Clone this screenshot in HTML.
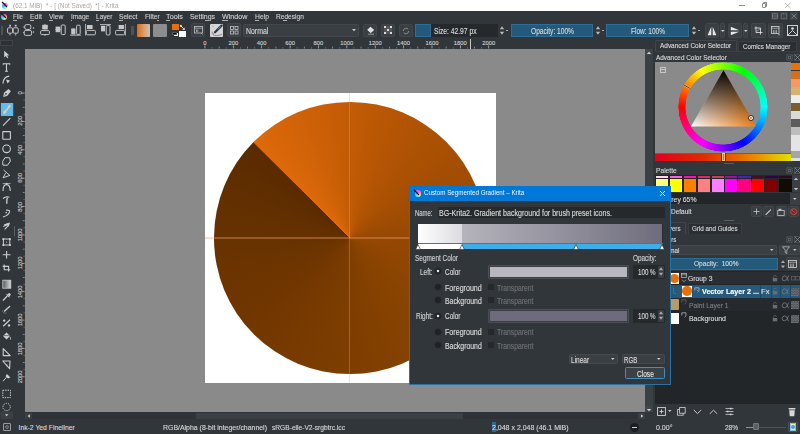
<!DOCTYPE html>
<html><head><meta charset="utf-8">
<style>
*{margin:0;padding:0;box-sizing:border-box}
html,body{width:800px;height:434px;overflow:hidden;background:#31363b;font-family:"Liberation Sans",sans-serif;color:#d8d8d8;position:relative}
.a{position:absolute}
.t{position:absolute;white-space:pre;line-height:1;-webkit-text-stroke:0.12px currentColor}
svg.a{overflow:visible}
</style></head><body>
<div class="a" style="left:0px;top:0px;width:800px;height:11px;background:#ffffff;"></div>
<div class="a" style="left:2.3280000000000003px;top:2.528px;width:6.072px;height:6.072px;border-radius:50%;background:conic-gradient(from 0deg,#ff50f0 0deg,#ff70d0 60deg,#ffe070 115deg,#b0ff90 165deg,#40e8ff 215deg,#50b0ff 260deg,#c070ff 310deg,#ff50f0 360deg)"></div>
<svg class="a" style="left:1.8px;top:2px;" width="6.6" height="6.6" viewBox="0 0 6.6 6.6"><path d="M0.33 0.33 L4.488 4.488" stroke="#1a1a1a" stroke-width="1.32" stroke-linecap="round"/></svg>
<div class="t" style="left:12.80px;top:3.10px;font-size:6.800px;color:#a8a8a8;font-weight:400;transform:scale(0.9400,1.000);transform-origin:0 2.50px;-webkit-text-stroke:0">(62.1 MiB)  * - [ (Not Saved)  *] - Krita</div>
<div class="a" style="left:739.2px;top:4.9px;width:5.4px;height:0.5px;background:#909090;"></div>
<div class="a" style="left:761.5px;top:3.4px;width:4.6px;height:4.4px;border:0.6px solid #8a8a8a;border-radius:1px"></div>
<div class="a" style="left:763px;top:2.4px;width:4.4px;height:4.2px;border-top:0.6px solid #8a8a8a;border-right:0.6px solid #8a8a8a;border-radius:1px"></div>
<svg class="a" style="left:784.7px;top:2.6px;" width="5.5" height="5" viewBox="0 0 5.5 5"><path d="M0 0L5.5 5M5.5 0L0 5" stroke="#8a8a8a" stroke-width="0.6"/></svg>
<div class="a" style="left:1.428px;top:13.528px;width:6.072px;height:6.072px;border-radius:50%;background:conic-gradient(from 0deg,#ff50f0 0deg,#ff70d0 60deg,#ffe070 115deg,#b0ff90 165deg,#40e8ff 215deg,#50b0ff 260deg,#c070ff 310deg,#ff50f0 360deg)"></div>
<svg class="a" style="left:0.9px;top:13px;" width="6.6" height="6.6" viewBox="0 0 6.6 6.6"><path d="M0.33 0.33 L4.488 4.488" stroke="#1a1a1a" stroke-width="1.32" stroke-linecap="round"/></svg>
<div class="t" style="left:13.20px;top:13.90px;font-size:6.800px;color:#cfcfcf;font-weight:400;transform:scale(0.9211,1.000);transform-origin:0 2.50px;">File</div>
<div class="t" style="left:29.90px;top:13.90px;font-size:6.800px;color:#cfcfcf;font-weight:400;transform:scale(1.0154,1.000);transform-origin:0 2.50px;">Edit</div>
<div class="t" style="left:48.90px;top:13.90px;font-size:6.800px;color:#cfcfcf;font-weight:400;transform:scale(0.9918,1.000);transform-origin:0 2.50px;">View</div>
<div class="t" style="left:70.50px;top:13.90px;font-size:6.800px;color:#cfcfcf;font-weight:400;transform:scale(0.9629,1.000);transform-origin:0 2.50px;">Image</div>
<div class="t" style="left:95.60px;top:13.90px;font-size:6.800px;color:#cfcfcf;font-weight:400;transform:scale(0.9641,1.000);transform-origin:0 2.50px;">Layer</div>
<div class="t" style="left:119.00px;top:13.90px;font-size:6.800px;color:#cfcfcf;font-weight:400;transform:scale(0.9734,1.000);transform-origin:0 2.50px;">Select</div>
<div class="t" style="left:144.50px;top:13.90px;font-size:6.800px;color:#cfcfcf;font-weight:400;transform:scale(0.9723,1.000);transform-origin:0 2.50px;">Filter</div>
<div class="t" style="left:166.00px;top:13.90px;font-size:6.800px;color:#cfcfcf;font-weight:400;transform:scale(1.0702,1.000);transform-origin:0 2.50px;">Tools</div>
<div class="t" style="left:190.00px;top:13.90px;font-size:6.800px;color:#cfcfcf;font-weight:400;transform:scale(1.0173,1.000);transform-origin:0 2.50px;">Settings</div>
<div class="t" style="left:222.30px;top:13.90px;font-size:6.800px;color:#cfcfcf;font-weight:400;transform:scale(1.0499,1.000);transform-origin:0 2.50px;">Window</div>
<div class="t" style="left:254.50px;top:13.90px;font-size:6.800px;color:#cfcfcf;font-weight:400;transform:scale(0.9933,1.000);transform-origin:0 2.50px;">Help</div>
<div class="t" style="left:275.50px;top:13.90px;font-size:6.800px;color:#cfcfcf;font-weight:400;transform:scale(0.9708,1.000);transform-origin:0 2.50px;">Redesign</div>
<div class="a" style="left:13.2px;top:19.7px;width:3.6px;height:0.6px;background:#b0b0b0;"></div>
<div class="a" style="left:29.9px;top:19.7px;width:3.8px;height:0.6px;background:#b0b0b0;"></div>
<div class="a" style="left:48.9px;top:19.7px;width:4.4px;height:0.6px;background:#b0b0b0;"></div>
<div class="a" style="left:70.5px;top:19.7px;width:1.6px;height:0.6px;background:#b0b0b0;"></div>
<div class="a" style="left:95.6px;top:19.7px;width:3.4px;height:0.6px;background:#b0b0b0;"></div>
<div class="a" style="left:119px;top:19.7px;width:3.8px;height:0.6px;background:#b0b0b0;"></div>
<div class="a" style="left:156.8px;top:19.7px;width:2.4px;height:0.6px;background:#b0b0b0;"></div>
<div class="a" style="left:166px;top:19.7px;width:3.8px;height:0.6px;background:#b0b0b0;"></div>
<div class="a" style="left:205.2px;top:19.7px;width:3.6px;height:0.6px;background:#b0b0b0;"></div>
<div class="a" style="left:222.3px;top:19.7px;width:6px;height:0.6px;background:#b0b0b0;"></div>
<div class="a" style="left:254.5px;top:19.7px;width:4.4px;height:0.6px;background:#b0b0b0;"></div>
<div class="a" style="left:283.3px;top:19.7px;width:3.6px;height:0.6px;background:#b0b0b0;"></div>
<div class="a" style="left:770.7px;top:12.3px;width:8px;height:7.8px;background:#40454a;border-radius:1px"></div>
<div class="a" style="left:780.3px;top:12.3px;width:8px;height:7.8px;background:#40454a;border-radius:1px"></div>
<div class="a" style="left:790.4px;top:12.3px;width:8px;height:7.8px;background:#40454a;border-radius:1px"></div>
<svg class="a" style="left:770.7px;top:12.3px;" width="8" height="8" viewBox="0 0 8 8"><rect x="1.5" y="1.8" width="5" height="4.4" fill="none" stroke="#8a8f94" stroke-width="0.6"/><path d="M1.5 4H6.5" stroke="#8a8f94" stroke-width="0.6"/></svg>
<svg class="a" style="left:780.3px;top:12.3px;" width="8" height="8" viewBox="0 0 8 8"><rect x="1.5" y="1.5" width="5" height="5" fill="none" stroke="#8a8f94" stroke-width="0.6" stroke-dasharray="1 0.6"/></svg>
<svg class="a" style="left:790.4px;top:12.3px;" width="8" height="8" viewBox="0 0 8 8"><path d="M1.5 1.5L6.5 6.5M6.5 1.5L1.5 6.5" stroke="#8a8f94" stroke-width="0.7"/></svg>
<div class="a" style="left:1.3px;top:25.7px;width:2.2px;height:9.2px;background:#4d5257;"></div>
<svg class="a" style="left:7px;top:24px;" width="12" height="12" viewBox="0 0 12 12"><rect x="0.6" y="3.8" width="5" height="5.4" rx="1" fill="none" stroke="#c4c6c8" stroke-width="1"/><rect x="6.2" y="3.8" width="5" height="5.4" rx="1" fill="none" stroke="#c4c6c8" stroke-width="1"/><rect x="2.2" y="0.8" width="1.8" height="1.8" fill="#c4c6c8"/><rect x="7.8" y="0.8" width="1.8" height="1.8" fill="#c4c6c8"/><path d="M3 9.5V11.5M8.7 9.5V11.5" stroke="#c4c6c8" stroke-width="0.9"/></svg>
<svg class="a" style="left:23px;top:24px;" width="12" height="12" viewBox="0 0 12 12"><rect x="1.8" y="0.6" width="6" height="4.8" rx="1.5" fill="none" stroke="#c4c6c8" stroke-width="1"/><rect x="1.2" y="6.4" width="7.4" height="5" rx="1.5" fill="none" stroke="#c4c6c8" stroke-width="1"/><circle cx="10.5" cy="4" r="0.8" fill="#c4c6c8"/><circle cx="10.5" cy="8" r="0.8" fill="#c4c6c8"/><path d="M0 3H1.8M0 8.5H1.2" stroke="#c4c6c8" stroke-width="0.8"/></svg>
<svg class="a" style="left:39.5px;top:24px;" width="11" height="12" viewBox="0 0 11 12"><rect x="2.2" y="0.8" width="5.6" height="4.6" fill="#c4c6c8"/><rect x="0.6" y="6.6" width="8.8" height="4" rx="1" fill="none" stroke="#c4c6c8" stroke-width="1"/><path d="M5 0V1M5 5.4V6.6M5 10.6V12" stroke="#c4c6c8" stroke-width="0.8"/></svg>
<svg class="a" style="left:54.5px;top:24px;" width="11" height="12" viewBox="0 0 11 12"><rect x="0.6" y="2.6" width="4.6" height="5.6" fill="#c4c6c8"/><rect x="6.2" y="1" width="4" height="9.6" rx="1" fill="none" stroke="#c4c6c8" stroke-width="1"/><path d="M0 5.4H0.6M5.2 5.4H6.2" stroke="#c4c6c8" stroke-width="0.8"/></svg>
<svg class="a" style="left:69.5px;top:24px;" width="11" height="12" viewBox="0 0 11 12"><rect x="1.2" y="4.4" width="4.2" height="6" fill="#c4c6c8"/><rect x="6.6" y="1.2" width="3.6" height="9.2" rx="1" fill="none" stroke="#c4c6c8" stroke-width="1"/><path d="M0 11.2H11" stroke="#c4c6c8" stroke-width="0.9"/></svg>
<svg class="a" style="left:84.5px;top:24px;" width="11" height="12" viewBox="0 0 11 12"><path d="M0.6 0V11.5" stroke="#c4c6c8" stroke-width="0.9"/><rect x="2" y="1" width="5.6" height="4" fill="#c4c6c8"/><rect x="1.4" y="6.4" width="9" height="4.4" rx="1" fill="none" stroke="#c4c6c8" stroke-width="1"/></svg>
<svg class="a" style="left:99.5px;top:24px;" width="11" height="12" viewBox="0 0 11 12"><path d="M0 0.6H11" stroke="#c4c6c8" stroke-width="0.9"/><rect x="1" y="1.8" width="4" height="5.6" fill="#c4c6c8"/><rect x="6.2" y="1.6" width="3.8" height="9.4" rx="1" fill="none" stroke="#c4c6c8" stroke-width="1"/></svg>
<svg class="a" style="left:115px;top:24px;" width="11" height="12" viewBox="0 0 11 12"><path d="M10.4 0V11.5" stroke="#c4c6c8" stroke-width="0.9"/><rect x="3.6" y="1" width="5.4" height="4" fill="#c4c6c8"/><rect x="0.6" y="6.4" width="9" height="4.4" rx="1" fill="none" stroke="#c4c6c8" stroke-width="1"/></svg>
<div class="a" style="left:131px;top:25.8px;width:2.6px;height:9.2px;background:#4d5257;"></div>
<div class="a" style="left:136.8px;top:23.7px;width:13.5px;height:13.3px;background:linear-gradient(90deg,#e06a10,#d7a072 55%,#c8c2bc);border-radius:1px"></div>
<div class="a" style="left:153px;top:23.7px;width:13.7px;height:13.3px;background:#8d8d8d;border-radius:1px"></div>
<div class="a" style="left:171.9px;top:23.9px;width:6.9px;height:6px;background:#e8700a;"></div>
<div class="a" style="left:179.4px;top:31px;width:6.2px;height:6px;background:#ffffff;"></div>
<div class="a" style="left:174.2px;top:32.8px;width:3.8px;height:3.6px;background:#fff;"></div>
<div class="a" style="left:172.2px;top:31.6px;width:4.4px;height:3.2px;background:#000;border:0.5px solid #555"></div>
<svg class="a" style="left:179px;top:23.5px;" width="7" height="7" viewBox="0 0 7 7"><path d="M1.8 1.8 L4.6 4.8" stroke="#e8e8e8" stroke-width="1"/><path d="M0.8 0.8 L3.2 1.2 L1.2 3.2Z" fill="#e8e8e8"/><path d="M5.8 6 L3.2 5.8 L5.6 3.4Z" fill="#e8e8e8"/></svg>
<div class="a" style="left:191px;top:23.3px;width:14.2px;height:14px;background:#3a3f44;border:0.6px solid #42474c;border-radius:1.5px"></div>
<svg class="a" style="left:193.5px;top:26px;" width="10" height="9" viewBox="0 0 10 9"><rect x="0.5" y="0.5" width="8" height="6.5" fill="none" stroke="#c4c6c8" stroke-width="0.8"/><path d="M0.5 2.2H8.5M2.5 3.5V6M3.8 3.5V6" stroke="#c4c6c8" stroke-width="0.7"/><path d="M7 7L8.5 8.5" stroke="#c4c6c8" stroke-width="0.7"/></svg>
<div class="a" style="left:209.6px;top:23.7px;width:13.4px;height:13.3px;background:#d6d6d6;border-radius:1px"></div>
<svg class="a" style="left:209.6px;top:23.7px;" width="13.4" height="13.3" viewBox="0 0 13.4 13.3"><path d="M11.6 1.6 L5 8.2" stroke="#2c3440" stroke-width="2.2" stroke-linecap="round"/><path d="M10.8 2.4 L8 5.2" stroke="#5a9ac0" stroke-width="0.9"/><path d="M5 8.2 L3.6 9.6" stroke="#2c3440" stroke-width="0.8"/><path d="M2.2 7.5 Q1.5 12 7 11.6 Q11 11.2 12.2 10.2" stroke="#7a7a7a" stroke-width="0.8" fill="none"/><path d="M1.8 1.6 L4 3" stroke="#999" stroke-width="0.6"/></svg>
<div class="a" style="left:226.7px;top:23.3px;width:14.3px;height:14px;background:#3a3f44;border:0.6px solid #42474c;border-radius:1.5px"></div>
<svg class="a" style="left:229.5px;top:26px;" width="9" height="9" viewBox="0 0 9 9"><rect x="0.5" y="0.5" width="3" height="3" fill="none" stroke="#c4c6c8" stroke-width="0.8"/><rect x="5" y="0.5" width="3" height="3" fill="none" stroke="#c4c6c8" stroke-width="0.8"/><rect x="0.5" y="5" width="3" height="3" fill="none" stroke="#c4c6c8" stroke-width="0.8"/><rect x="5" y="5" width="3" height="3" fill="none" stroke="#c4c6c8" stroke-width="0.8"/></svg>
<div class="a" style="left:243.3px;top:23.5px;width:116px;height:13.6px;background:#3a3f44;border:0.6px solid #45494e;border-radius:1.5px"></div>
<div class="t" style="left:245.50px;top:28.00px;font-size:6.800px;color:#d6d6d6;font-weight:400;transform:scale(1.0174,1.200);transform-origin:0 2.50px;">Normal</div>
<svg class="a" style="left:352px;top:29.3px;" width="4" height="3" viewBox="0 0 4 3"><path d="M0 0H4L2 2.2Z" fill="#c8c8c8"/></svg>
<div class="a" style="left:362.7px;top:23.5px;width:14.6px;height:13.6px;background:#3a3f44;border:0.6px solid #42474c;border-radius:1.5px"></div>
<svg class="a" style="left:365.5px;top:26px;" width="9" height="9" viewBox="0 0 9 9"><path d="M4.5 0.8L8.2 4 L4.5 7.2 L1 4Z" fill="#e0e0e0"/><path d="M1 4L3 6L4.5 7.2" stroke="#31363b" stroke-width="0.6" fill="none"/><path d="M2 8.2H8" stroke="#ccc" stroke-width="0.6"/></svg>
<div class="a" style="left:381px;top:23.5px;width:14.3px;height:13.6px;background:#3a3f44;border:0.6px solid #42474c;border-radius:1.5px"></div>
<svg class="a" style="left:384px;top:26.3px;" width="8" height="8" viewBox="0 0 8 8"><rect x="0" y="0" width="8" height="8" fill="#ddd"/><rect x="2" y="0" width="4" height="2" fill="#555"/><rect x="0" y="2" width="2" height="4" fill="#555"/><rect x="6" y="2" width="2" height="4" fill="#555"/><rect x="2" y="6" width="4" height="2" fill="#555"/><rect x="2" y="2" width="4" height="4" fill="#555"/><rect x="3" y="3" width="2" height="2" fill="#ddd"/></svg>
<div class="a" style="left:398.7px;top:23.5px;width:14.3px;height:13.6px;background:#3a3f44;border:0.6px solid #42474c;border-radius:1.5px"></div>
<svg class="a" style="left:402px;top:26.5px;" width="8" height="8" viewBox="0 0 8 8"><path d="M1.3 4 A2.8 2.8 0 0 1 6.2 2.2M6.7 4 A2.8 2.8 0 0 1 1.8 5.8" fill="none" stroke="#9a9ea2" stroke-width="0.8"/></svg>
<div class="a" style="left:415px;top:23.75px;width:16.3px;height:13.2px;background:#23597a;border:0.6px solid #2f6e92"></div>
<div class="a" style="left:431.3px;top:23.75px;width:66.3px;height:13.2px;background:#25292c;"></div>
<div class="t" style="left:434.40px;top:28.00px;font-size:6.800px;color:#d6d6d6;font-weight:400;transform:scale(0.9862,1.200);transform-origin:0 2.50px;">Size: 42.97 px</div>
<svg class="a" style="left:499px;top:24px;" width="6" height="13" viewBox="0 0 6 13"><path d="M0.9 5.2L3 2.34L5.1 5.2Z" fill="#bbb"/><path d="M0.9 7.8L3 10.66L5.1 7.8Z" fill="#bbb"/></svg>
<div class="a" style="left:506px;top:30.3px;width:2px;height:0.7px;background:#aaa;"></div>
<div class="a" style="left:510.6px;top:23.75px;width:82.4px;height:13.2px;background:#23597a;border:0.6px solid #2f6e92"></div>
<div class="t" style="left:530.50px;top:28.00px;font-size:6.800px;color:#d6d6d6;font-weight:400;transform:scale(0.9721,1.200);transform-origin:0 2.50px;">Opacity: 100%</div>
<svg class="a" style="left:595px;top:24px;" width="6" height="13" viewBox="0 0 6 13"><path d="M0.9 5.2L3 2.34L5.1 5.2Z" fill="#bbb"/><path d="M0.9 7.8L3 10.66L5.1 7.8Z" fill="#bbb"/></svg>
<div class="a" style="left:602px;top:30.3px;width:2px;height:0.7px;background:#aaa;"></div>
<div class="a" style="left:606px;top:23.75px;width:83px;height:13.2px;background:#23597a;border:0.6px solid #2f6e92"></div>
<div class="t" style="left:630.50px;top:28.00px;font-size:6.800px;color:#d6d6d6;font-weight:400;transform:scale(0.9569,1.200);transform-origin:0 2.50px;">Flow: 100%</div>
<svg class="a" style="left:690.5px;top:24px;" width="6" height="13" viewBox="0 0 6 13"><path d="M0.9 5.2L3 2.34L5.1 5.2Z" fill="#bbb"/><path d="M0.9 7.8L3 10.66L5.1 7.8Z" fill="#bbb"/></svg>
<div class="a" style="left:697.5px;top:30.3px;width:2px;height:0.7px;background:#aaa;"></div>
<div class="a" style="left:705px;top:23.2px;width:14px;height:14.5px;background:#3a3f44;border:0.6px solid #42474c;border-radius:1.5px"></div>
<svg class="a" style="left:707px;top:25.5px;" width="10" height="10" viewBox="0 0 10 10"><path d="M4.3 0.8 L0.6 9.2 H4.3Z" fill="#e8e8e8"/><path d="M5.7 0.8 L9.4 9.2 H5.7Z" fill="#e8e8e8"/></svg>
<div class="a" style="left:720px;top:23.2px;width:5px;height:14.5px;background:#3a3f44;border:0.6px solid #42474c;border-radius:1.5px"></div>
<svg class="a" style="left:720.7px;top:29.5px;" width="4" height="3" viewBox="0 0 4 3"><path d="M0 0H3.6L1.8 2Z" fill="#ccc"/></svg>
<div class="a" style="left:728px;top:23.2px;width:14px;height:14.5px;background:#3a3f44;border:0.6px solid #42474c;border-radius:1.5px"></div>
<svg class="a" style="left:730px;top:25.5px;" width="10" height="10" viewBox="0 0 10 10"><path d="M0.8 0.8 L9.2 4.3 V0.8Z" fill="none"/><path d="M0.8 0.8 L9.2 4.3 H0.8Z" fill="#e8e8e8"/><path d="M0.8 9.2 L9.2 5.7 H0.8Z" fill="#e8e8e8"/></svg>
<div class="a" style="left:743px;top:23.2px;width:5px;height:14.5px;background:#3a3f44;border:0.6px solid #42474c;border-radius:1.5px"></div>
<svg class="a" style="left:743.7px;top:29.5px;" width="4" height="3" viewBox="0 0 4 3"><path d="M0 0H3.6L1.8 2Z" fill="#ccc"/></svg>
<div class="a" style="left:751px;top:23.2px;width:14.5px;height:14.5px;background:#3a3f44;border:0.6px solid #42474c;border-radius:1.5px"></div>
<svg class="a" style="left:754px;top:26px;" width="9" height="9" viewBox="0 0 9 9"><path d="M2 0.5V6.5H8.5M0.5 2H6.5V8.5" fill="none" stroke="#d8d8d8" stroke-width="0.9"/><path d="M3 5.5L6 2.5" stroke="#d8d8d8" stroke-width="0.7"/></svg>
<div class="a" style="left:768.3px;top:23.2px;width:14.5px;height:14.5px;background:#3a3f44;border:0.6px solid #42474c;border-radius:1.5px"></div>
<svg class="a" style="left:771px;top:26px;" width="10" height="10" viewBox="0 0 10 10"><rect x="0.5" y="0.5" width="7.5" height="7" fill="none" stroke="#d8d8d8" stroke-width="0.8"/><path d="M0.5 2.3H8M2.5 4V7M4 4V7M5.5 4V7" stroke="#d8d8d8" stroke-width="0.6"/><path d="M7 8.5L9 9" stroke="#d8d8d8" stroke-width="0.6"/></svg>
<svg class="a" style="left:786.5px;top:25px;" width="11" height="11" viewBox="0 0 11 11"><rect x="0.5" y="0.5" width="10" height="10" fill="none" stroke="#e0e0e0" stroke-width="0.9"/><path d="M0.5 10.5L5.5 5.5L10.5 10.5" fill="none" stroke="#e0e0e0" stroke-width="0.9"/><circle cx="5.5" cy="3.5" r="1.3" fill="#e0e0e0"/></svg>
<div class="a" style="left:0px;top:40px;width:13px;height:6.2px;background:#2d3135;border:0.6px solid #3f4449"></div>
<svg class="a" style="left:0;top:0" width="800" height="60"><rect x="204.60" y="45.4" width="0.7" height="3" fill="#c8c8c8"/><rect x="211.69" y="47.3" width="0.6" height="1.2" fill="#999"/><rect x="218.79" y="46.6" width="0.7" height="1.9" fill="#aaaaaa"/><rect x="225.88" y="47.3" width="0.6" height="1.2" fill="#999"/><rect x="232.98" y="45.4" width="0.7" height="3" fill="#c8c8c8"/><rect x="240.07" y="47.3" width="0.6" height="1.2" fill="#999"/><rect x="247.17" y="46.6" width="0.7" height="1.9" fill="#aaaaaa"/><rect x="254.26" y="47.3" width="0.6" height="1.2" fill="#999"/><rect x="261.36" y="45.4" width="0.7" height="3" fill="#c8c8c8"/><rect x="268.45" y="47.3" width="0.6" height="1.2" fill="#999"/><rect x="275.55" y="46.6" width="0.7" height="1.9" fill="#aaaaaa"/><rect x="282.64" y="47.3" width="0.6" height="1.2" fill="#999"/><rect x="289.74" y="45.4" width="0.7" height="3" fill="#c8c8c8"/><rect x="296.83" y="47.3" width="0.6" height="1.2" fill="#999"/><rect x="303.93" y="46.6" width="0.7" height="1.9" fill="#aaaaaa"/><rect x="311.02" y="47.3" width="0.6" height="1.2" fill="#999"/><rect x="318.12" y="45.4" width="0.7" height="3" fill="#c8c8c8"/><rect x="325.21" y="47.3" width="0.6" height="1.2" fill="#999"/><rect x="332.31" y="46.6" width="0.7" height="1.9" fill="#aaaaaa"/><rect x="339.40" y="47.3" width="0.6" height="1.2" fill="#999"/><rect x="346.49" y="45.4" width="0.7" height="3" fill="#c8c8c8"/><rect x="353.59" y="47.3" width="0.6" height="1.2" fill="#999"/><rect x="360.68" y="46.6" width="0.7" height="1.9" fill="#aaaaaa"/><rect x="367.78" y="47.3" width="0.6" height="1.2" fill="#999"/><rect x="374.87" y="45.4" width="0.7" height="3" fill="#c8c8c8"/><rect x="381.97" y="47.3" width="0.6" height="1.2" fill="#999"/><rect x="389.06" y="46.6" width="0.7" height="1.9" fill="#aaaaaa"/><rect x="396.16" y="47.3" width="0.6" height="1.2" fill="#999"/><rect x="403.25" y="45.4" width="0.7" height="3" fill="#c8c8c8"/><rect x="410.35" y="47.3" width="0.6" height="1.2" fill="#999"/><rect x="417.44" y="46.6" width="0.7" height="1.9" fill="#aaaaaa"/><rect x="424.54" y="47.3" width="0.6" height="1.2" fill="#999"/><rect x="431.63" y="45.4" width="0.7" height="3" fill="#c8c8c8"/><rect x="438.73" y="47.3" width="0.6" height="1.2" fill="#999"/><rect x="445.82" y="46.6" width="0.7" height="1.9" fill="#aaaaaa"/><rect x="452.92" y="47.3" width="0.6" height="1.2" fill="#999"/><rect x="460.01" y="45.4" width="0.7" height="3" fill="#c8c8c8"/><rect x="467.10" y="47.3" width="0.6" height="1.2" fill="#999"/><rect x="474.20" y="46.6" width="0.7" height="1.9" fill="#aaaaaa"/><rect x="481.29" y="47.3" width="0.6" height="1.2" fill="#999"/><rect x="488.39" y="45.4" width="0.7" height="3" fill="#c8c8c8"/></svg>
<div class="t" style="left:203.29px;top:40.79px;font-size:5.800px;color:#d0d0d0;font-weight:400;">0</div>
<div class="t" style="left:228.44px;top:40.79px;font-size:5.800px;color:#d0d0d0;font-weight:400;">200</div>
<div class="t" style="left:256.82px;top:40.79px;font-size:5.800px;color:#d0d0d0;font-weight:400;">400</div>
<div class="t" style="left:285.20px;top:40.79px;font-size:5.800px;color:#d0d0d0;font-weight:400;">600</div>
<div class="t" style="left:313.58px;top:40.79px;font-size:5.800px;color:#d0d0d0;font-weight:400;">800</div>
<div class="t" style="left:340.34px;top:40.79px;font-size:5.800px;color:#d0d0d0;font-weight:400;">1000</div>
<div class="t" style="left:368.72px;top:40.79px;font-size:5.800px;color:#d0d0d0;font-weight:400;">1200</div>
<div class="t" style="left:397.10px;top:40.79px;font-size:5.800px;color:#d0d0d0;font-weight:400;">1400</div>
<div class="t" style="left:425.48px;top:40.79px;font-size:5.800px;color:#d0d0d0;font-weight:400;">1600</div>
<div class="t" style="left:453.86px;top:40.79px;font-size:5.800px;color:#d0d0d0;font-weight:400;">1800</div>
<div class="t" style="left:482.24px;top:40.79px;font-size:5.800px;color:#d0d0d0;font-weight:400;">2000</div>
<div class="a" style="left:469.6px;top:39px;width:0.8px;height:9.5px;background:#c8c8c8;"></div>
<svg class="a" style="left:0;top:0" width="30" height="434"><rect x="21.6" y="92.70" width="3" height="0.7" fill="#c8c8c8"/><rect x="23.5" y="99.79" width="1.2" height="0.6" fill="#999"/><rect x="22.8" y="106.89" width="1.9" height="0.7" fill="#aaaaaa"/><rect x="23.5" y="113.98" width="1.2" height="0.6" fill="#999"/><rect x="21.6" y="121.08" width="3" height="0.7" fill="#c8c8c8"/><rect x="23.5" y="128.17" width="1.2" height="0.6" fill="#999"/><rect x="22.8" y="135.27" width="1.9" height="0.7" fill="#aaaaaa"/><rect x="23.5" y="142.36" width="1.2" height="0.6" fill="#999"/><rect x="21.6" y="149.46" width="3" height="0.7" fill="#c8c8c8"/><rect x="23.5" y="156.55" width="1.2" height="0.6" fill="#999"/><rect x="22.8" y="163.65" width="1.9" height="0.7" fill="#aaaaaa"/><rect x="23.5" y="170.74" width="1.2" height="0.6" fill="#999"/><rect x="21.6" y="177.84" width="3" height="0.7" fill="#c8c8c8"/><rect x="23.5" y="184.93" width="1.2" height="0.6" fill="#999"/><rect x="22.8" y="192.03" width="1.9" height="0.7" fill="#aaaaaa"/><rect x="23.5" y="199.12" width="1.2" height="0.6" fill="#999"/><rect x="21.6" y="206.22" width="3" height="0.7" fill="#c8c8c8"/><rect x="23.5" y="213.31" width="1.2" height="0.6" fill="#999"/><rect x="22.8" y="220.41" width="1.9" height="0.7" fill="#aaaaaa"/><rect x="23.5" y="227.50" width="1.2" height="0.6" fill="#999"/><rect x="21.6" y="234.59" width="3" height="0.7" fill="#c8c8c8"/><rect x="23.5" y="241.69" width="1.2" height="0.6" fill="#999"/><rect x="22.8" y="248.78" width="1.9" height="0.7" fill="#aaaaaa"/><rect x="23.5" y="255.88" width="1.2" height="0.6" fill="#999"/><rect x="21.6" y="262.97" width="3" height="0.7" fill="#c8c8c8"/><rect x="23.5" y="270.07" width="1.2" height="0.6" fill="#999"/><rect x="22.8" y="277.16" width="1.9" height="0.7" fill="#aaaaaa"/><rect x="23.5" y="284.26" width="1.2" height="0.6" fill="#999"/><rect x="21.6" y="291.35" width="3" height="0.7" fill="#c8c8c8"/><rect x="23.5" y="298.45" width="1.2" height="0.6" fill="#999"/><rect x="22.8" y="305.54" width="1.9" height="0.7" fill="#aaaaaa"/><rect x="23.5" y="312.64" width="1.2" height="0.6" fill="#999"/><rect x="21.6" y="319.73" width="3" height="0.7" fill="#c8c8c8"/><rect x="23.5" y="326.83" width="1.2" height="0.6" fill="#999"/><rect x="22.8" y="333.92" width="1.9" height="0.7" fill="#aaaaaa"/><rect x="23.5" y="341.02" width="1.2" height="0.6" fill="#999"/><rect x="21.6" y="348.11" width="3" height="0.7" fill="#c8c8c8"/><rect x="23.5" y="355.20" width="1.2" height="0.6" fill="#999"/><rect x="22.8" y="362.30" width="1.9" height="0.7" fill="#aaaaaa"/><rect x="23.5" y="369.39" width="1.2" height="0.6" fill="#999"/><rect x="21.6" y="376.49" width="3" height="0.7" fill="#c8c8c8"/></svg>
<div class="t" style="left:11px;top:90.10px;width:20px;height:5.8px;font-size:5.8px;text-align:center;color:#d0d0d0;transform:rotate(-90deg);transform-origin:10px 2.9px">0</div>
<div class="t" style="left:11px;top:118.48px;width:20px;height:5.8px;font-size:5.8px;text-align:center;color:#d0d0d0;transform:rotate(-90deg);transform-origin:10px 2.9px">200</div>
<div class="t" style="left:11px;top:146.86px;width:20px;height:5.8px;font-size:5.8px;text-align:center;color:#d0d0d0;transform:rotate(-90deg);transform-origin:10px 2.9px">400</div>
<div class="t" style="left:11px;top:175.24px;width:20px;height:5.8px;font-size:5.8px;text-align:center;color:#d0d0d0;transform:rotate(-90deg);transform-origin:10px 2.9px">600</div>
<div class="t" style="left:11px;top:203.62px;width:20px;height:5.8px;font-size:5.8px;text-align:center;color:#d0d0d0;transform:rotate(-90deg);transform-origin:10px 2.9px">800</div>
<div class="t" style="left:11px;top:231.99px;width:20px;height:5.8px;font-size:5.8px;text-align:center;color:#d0d0d0;transform:rotate(-90deg);transform-origin:10px 2.9px">1000</div>
<div class="t" style="left:11px;top:260.37px;width:20px;height:5.8px;font-size:5.8px;text-align:center;color:#d0d0d0;transform:rotate(-90deg);transform-origin:10px 2.9px">1200</div>
<div class="t" style="left:11px;top:288.75px;width:20px;height:5.8px;font-size:5.8px;text-align:center;color:#d0d0d0;transform:rotate(-90deg);transform-origin:10px 2.9px">1400</div>
<div class="t" style="left:11px;top:317.13px;width:20px;height:5.8px;font-size:5.8px;text-align:center;color:#d0d0d0;transform:rotate(-90deg);transform-origin:10px 2.9px">1600</div>
<div class="t" style="left:11px;top:345.51px;width:20px;height:5.8px;font-size:5.8px;text-align:center;color:#d0d0d0;transform:rotate(-90deg);transform-origin:10px 2.9px">1800</div>
<div class="t" style="left:11px;top:373.89px;width:20px;height:5.8px;font-size:5.8px;text-align:center;color:#d0d0d0;transform:rotate(-90deg);transform-origin:10px 2.9px">2000</div>
<div class="a" style="left:25px;top:48.6px;width:619.5px;height:363.7px;background:#8a8a8a;"></div>
<div class="a" style="left:204.8px;top:92.7px;width:290.8px;height:290.2px;background:#ffffff;"></div>
<div class="a" style="left:214.3px;top:102px;width:271.6px;height:271.6px;border-radius:50%;background:conic-gradient(from 315deg,#dd690a 0deg,#c25b05 45deg,#b05304 75deg,#a24d03 105deg,#964802 135deg,#8a4401 180deg,#7e3e00 225deg,#733700 270deg,#673200 315deg,#5a2b00 359.4deg,#dd690a 360deg)"></div>
<div class="a" style="left:348.9px;top:92.7px;width:1.4px;height:290.2px;background:rgba(245,160,110,0.36);"></div>
<div class="a" style="left:204.8px;top:237.3px;width:290.8px;height:1.4px;background:rgba(245,160,110,0.36);"></div>
<div class="a" style="left:644.5px;top:48.6px;width:8px;height:363.7px;background:#3b4045;"></div>
<div class="a" style="left:645px;top:49px;width:6.5px;height:6px;background:#41464b;"></div>
<svg class="a" style="left:645.5px;top:50.5px;" width="6" height="4" viewBox="0 0 6 4"><path d="M0.8 3L3 0.8L5.2 3Z" fill="#d0d0d0"/></svg>
<div class="a" style="left:645px;top:406px;width:6.5px;height:6px;background:#41464b;"></div>
<svg class="a" style="left:645.5px;top:407.5px;" width="6" height="4" viewBox="0 0 6 4"><path d="M0.8 1L3 3.2L5.2 1Z" fill="#d0d0d0"/></svg>
<div class="a" style="left:25px;top:412.3px;width:619.5px;height:7.2px;background:#2f3337;"></div>
<div class="a" style="left:195.5px;top:412.5px;width:267px;height:6.8px;background:#3b4045;"></div>
<div class="a" style="left:25.3px;top:412.6px;width:6.5px;height:6.5px;background:#3a3f44;"></div>
<svg class="a" style="left:26px;top:413px;" width="6" height="6" viewBox="0 0 6 6"><path d="M3.8 1.2L1.6 3L3.8 4.8Z" fill="#d0d0d0"/></svg>
<div class="a" style="left:638px;top:412.6px;width:6.5px;height:6.5px;background:#3a3f44;"></div>
<svg class="a" style="left:638.5px;top:413px;" width="6" height="6" viewBox="0 0 6 6"><path d="M2 1.2L4.2 3L2 4.8Z" fill="#d0d0d0"/></svg>
<div class="a" style="left:0px;top:419.5px;width:800px;height:14.5px;background:#31363b;"></div>
<div class="a" style="left:3px;top:423px;width:8px;height:8px;border:0.8px solid #9a9ea2;border-radius:1px"></div>
<div class="a" style="left:4.8px;top:424.8px;width:4.4px;height:4.4px;border:0.6px solid #777;border-radius:50%;background:#555"></div>
<div class="t" style="left:18.50px;top:424.70px;font-size:6.800px;color:#d8d8d8;font-weight:400;">Ink-2 Yed Fineliner</div>
<div class="t" style="left:163.00px;top:424.70px;font-size:6.800px;color:#d8d8d8;font-weight:400;transform:scale(1.0191,1.000);transform-origin:0 2.50px;">RGB/Alpha (8-bit integer/channel)</div>
<div class="t" style="left:272.00px;top:424.70px;font-size:6.800px;color:#d8d8d8;font-weight:400;transform:scale(0.9757,1.000);transform-origin:0 2.50px;">sRGB-elle-V2-srgbtrc.icc</div>
<div class="a" style="left:491.8px;top:422.3px;width:4.2px;height:9.5px;background:#2a6a96;"></div>
<div class="t" style="left:492.40px;top:424.70px;font-size:6.800px;color:#d8d8d8;font-weight:400;transform:scale(1.0286,1.000);transform-origin:0 2.50px;">2,048 x 2,048 (46.1 MiB)</div>
<div class="a" style="left:629.8px;top:422.5px;width:9px;height:9px;border-radius:50%;background:#1c1f22"></div>
<div class="a" style="left:632px;top:426.6px;width:5px;height:0.8px;background:#d0d0d0;"></div>
<div class="t" style="left:655.50px;top:424.70px;font-size:6.800px;color:#d8d8d8;font-weight:400;transform:scale(1.0339,1.000);transform-origin:0 2.50px;">0.00°</div>
<div class="t" style="left:724.50px;top:424.70px;font-size:6.800px;color:#d8d8d8;font-weight:400;transform:scale(0.9551,1.000);transform-origin:0 2.50px;">28%</div>
<div class="a" style="left:746px;top:427px;width:40px;height:0.6px;background:#50555a;"></div>
<div class="a" style="left:746px;top:426.7px;width:8px;height:1.2px;background:#3daee9;"></div>
<div class="a" style="left:753px;top:423.3px;width:6px;height:7px;background:#5a5f64;border:0.6px solid #777;border-radius:1px"></div>
<div class="a" style="left:788px;top:421.8px;width:10px;height:10.4px;background:#3a3f44;border:0.6px solid #4b5055;border-radius:1px"></div>
<div class="a" style="left:789.6px;top:423.4px;width:6.8px;height:7.2px;background:#f0f0b0;border:0.6px solid #88c0e8"></div>
<div class="a" style="left:791px;top:424.8px;width:4px;height:4.4px;border-radius:50%;background:#40a0e0"></div>
<div class="a" style="left:654.7px;top:40.1px;width:82.5px;height:11px;background:#31363b;border:0.7px solid #41464b;border-bottom:none;border-radius:1.5px 1.5px 0 0"></div>
<div class="a" style="left:738px;top:41px;width:58.7px;height:10.5px;background:#2b2f33;border:0.7px solid #3a3f44;border-bottom:none;border-radius:1.5px 1.5px 0 0"></div>
<div class="t" style="left:660.30px;top:43.30px;font-size:6.800px;color:#dadada;font-weight:400;transform:scale(0.9478,1.000);transform-origin:0 2.50px;">Advanced Color Selector</div>
<div class="t" style="left:743.40px;top:43.90px;font-size:6.800px;color:#dadada;font-weight:400;transform:scale(0.9202,1.000);transform-origin:0 2.50px;">Comics Manager</div>
<div class="a" style="left:655px;top:51px;width:145px;height:0.6px;background:#3a3f44;"></div>
<div class="t" style="left:656.20px;top:55.10px;font-size:6.800px;color:#d8d8d8;font-weight:400;transform:scale(0.9412,1.000);transform-origin:0 2.50px;">Advanced Color Selector</div>
<svg class="a" style="left:786px;top:54.2px;" width="7" height="7" viewBox="0 0 7 7"><rect x="0.8" y="0.8" width="5.4" height="5.4" fill="none" stroke="#7a7f84" stroke-width="0.6" stroke-dasharray="1.2 0.6"/><rect x="2.2" y="2.2" width="2.6" height="2.6" fill="none" stroke="#7a7f84" stroke-width="0.5"/></svg>
<svg class="a" style="left:793.5px;top:54.2px;" width="7" height="7" viewBox="0 0 7 7"><path d="M0.8 0.8L6.2 6.2M6.2 0.8L0.8 6.2" stroke="#8a8f94" stroke-width="0.8"/><rect x="0.5" y="0.5" width="6" height="6" fill="none" stroke="#6a6f74" stroke-width="0.4"/></svg>
<div class="a" style="left:655px;top:62.2px;width:136.4px;height:99px;background:#8a8a8a;"></div>
<div class="a" style="left:791.4px;top:62.6px;width:8.6px;height:7.899999999999999px;background:#e8730a;"></div>
<div class="a" style="left:791.4px;top:70.5px;width:8.6px;height:8.0px;background:#d4701c;"></div>
<div class="a" style="left:791.4px;top:78.5px;width:8.6px;height:8.0px;background:#f39a62;"></div>
<div class="a" style="left:791.4px;top:86.5px;width:8.6px;height:8.0px;background:#d8b070;"></div>
<div class="a" style="left:791.4px;top:94.5px;width:8.6px;height:8.0px;background:#ececec;"></div>
<div class="a" style="left:791.4px;top:102.5px;width:8.6px;height:8.0px;background:#7d5c2e;"></div>
<div class="a" style="left:791.4px;top:110.5px;width:8.6px;height:8.0px;background:#dadada;"></div>
<div class="a" style="left:791.4px;top:118.5px;width:8.6px;height:8.0px;background:#5c5c5c;"></div>
<div class="a" style="left:791.4px;top:126.5px;width:8.6px;height:8.0px;background:#bdbdbd;"></div>
<div class="a" style="left:791.4px;top:134.5px;width:8.6px;height:16.0px;background:#e4e4e4;"></div>
<div class="a" style="left:791.4px;top:150.5px;width:8.6px;height:7.5px;background:#a4a4a4;"></div>
<div class="a" style="left:791.4px;top:158px;width:8.6px;height:3.1999999999999886px;background:#e0e0e0;"></div>
<div class="a" style="left:791.4px;top:62.2px;width:8.6px;height:0.4px;background:#31363b;"></div>
<div class="a" style="left:660px;top:67.2px;width:6.2px;height:6.2px;background:transparent;border:0.7px solid #c8c8c8;border-radius:0.5px"></div>
<div class="a" style="left:660px;top:68.6px;width:6.2px;height:0.6px;background:#c8c8c8;"></div>
<div class="a" style="left:678.2px;top:62.4px;width:89.6px;height:89.6px;border-radius:50%;background:conic-gradient(from 270deg,#ff0000,#ffff00,#00ff00,#00ffff,#0000ff,#ff00ff,#ff0000);-webkit-mask:radial-gradient(circle,transparent 37.2px,#000 37.8px,#000 44.3px,transparent 44.9px);mask:radial-gradient(circle,transparent 37.2px,#000 37.8px,#000 44.3px,transparent 44.9px)"></div>
<svg class="a" style="left:678px;top:62.4px;" width="90" height="90" viewBox="0 0 90 90"><path d="M5.2 22.6 L12.6 26.8" stroke="#f8d0a0" stroke-width="1.6"/><path d="M5.2 22.6 L12.6 26.8" stroke="#1a1a1a" stroke-width="0.8"/></svg>
<svg class="a" style="left:690px;top:69px;" width="68" height="59" viewBox="0 0 68 59"><defs><linearGradient id="tg1" x1="33.5" y1="1" x2="34" y2="57.6" gradientUnits="userSpaceOnUse"><stop offset="0" stop-color="#000"/><stop offset="1" stop-color="#000" stop-opacity="0"/></linearGradient><linearGradient id="tg2" x1="1" y1="57.6" x2="66" y2="57.6" gradientUnits="userSpaceOnUse"><stop offset="0" stop-color="#ffffff"/><stop offset="1" stop-color="#f07d10"/></linearGradient></defs><path d="M33.5 1 L66 57.6 L1 57.6Z" fill="url(#tg2)"/><path d="M33.5 1 L66 57.6 L1 57.6Z" fill="url(#tg1)"/></svg>
<div class="a" style="left:747.6px;top:114.8px;width:6.4px;height:6.4px;border-radius:50%;border:0.7px solid #333"></div>
<div class="a" style="left:748.6px;top:115.8px;width:4.4px;height:4.4px;border-radius:50%;border:0.5px solid #eee"></div>
<div class="a" style="left:655px;top:152.9px;width:136.4px;height:8.3px;background:linear-gradient(90deg,#e0001c 0%,#e02a00 35%,#e86a00 62%,#e8a000 80%,#e0e000 100%);"></div>
<div class="a" style="left:655px;top:152.6px;width:136.4px;height:0.5px;background:#5a5f80;"></div>
<div class="a" style="left:721px;top:152.6px;width:4.8px;height:8.8px;background:transparent;border:0.7px solid #404040"></div>
<div class="a" style="left:721.7px;top:153.3px;width:3.4px;height:7.4px;background:#e86a00;border:0.5px solid #f0c080"></div>
<div class="a" style="left:724px;top:163.2px;width:10px;height:0.8px;background:#5a5f64;"></div>
<div class="t" style="left:656.00px;top:167.70px;font-size:6.800px;color:#d8d8d8;font-weight:400;transform:scale(0.9775,1.000);transform-origin:0 2.50px;">Palette</div>
<svg class="a" style="left:786px;top:166.6px;" width="7" height="7" viewBox="0 0 7 7"><rect x="0.8" y="0.8" width="5.4" height="5.4" fill="none" stroke="#7a7f84" stroke-width="0.6" stroke-dasharray="1.2 0.6"/><rect x="2.2" y="2.2" width="2.6" height="2.6" fill="none" stroke="#7a7f84" stroke-width="0.5"/></svg>
<svg class="a" style="left:793.5px;top:166.6px;" width="7" height="7" viewBox="0 0 7 7"><path d="M0.8 0.8L6.2 6.2M6.2 0.8L0.8 6.2" stroke="#8a8f94" stroke-width="0.8"/><rect x="0.5" y="0.5" width="6" height="6" fill="none" stroke="#6a6f74" stroke-width="0.4"/></svg>
<div class="a" style="left:655px;top:175.3px;width:137px;height:17px;background:#232629;"></div>
<div class="a" style="left:655.6px;top:175.8px;width:12.5px;height:2.4px;background:#ffd4ea;"></div>
<div class="a" style="left:655.6px;top:178.8px;width:12.5px;height:13.0px;background:#ffff80;"></div>
<div class="a" style="left:669.7px;top:175.8px;width:12.5px;height:2.4px;background:#ff60d8;"></div>
<div class="a" style="left:669.7px;top:178.8px;width:12.5px;height:13.0px;background:#ffff00;"></div>
<div class="a" style="left:683.8px;top:175.8px;width:12.5px;height:2.4px;background:#ff10a8;"></div>
<div class="a" style="left:683.8px;top:178.8px;width:12.5px;height:13.0px;background:#ff8000;"></div>
<div class="a" style="left:697.8px;top:175.8px;width:12.5px;height:2.4px;background:#e02868;"></div>
<div class="a" style="left:697.8px;top:178.8px;width:12.5px;height:13.0px;background:#ff8080;"></div>
<div class="a" style="left:711.6px;top:175.8px;width:12.5px;height:2.4px;background:#c84060;"></div>
<div class="a" style="left:711.6px;top:178.8px;width:12.5px;height:13.0px;background:#ff80ff;"></div>
<div class="a" style="left:724.9px;top:175.8px;width:12.5px;height:2.4px;background:#a010a0;"></div>
<div class="a" style="left:724.9px;top:178.8px;width:12.5px;height:13.0px;background:#ff00ff;"></div>
<div class="a" style="left:738.3px;top:175.8px;width:12.5px;height:2.4px;background:#4028b0;"></div>
<div class="a" style="left:738.3px;top:178.8px;width:12.5px;height:13.0px;background:#ff0080;"></div>
<div class="a" style="left:751.6px;top:175.8px;width:12.5px;height:2.4px;background:#500a1c;"></div>
<div class="a" style="left:751.6px;top:178.8px;width:12.5px;height:13.0px;background:#ff0000;"></div>
<div class="a" style="left:765.2px;top:175.8px;width:12.5px;height:2.4px;background:#300050;"></div>
<div class="a" style="left:765.2px;top:178.8px;width:12.5px;height:13.0px;background:#800000;"></div>
<div class="a" style="left:779.1px;top:175.8px;width:12.5px;height:2.4px;background:#2a0822;"></div>
<div class="a" style="left:779.1px;top:178.8px;width:12.5px;height:13.0px;background:#100c02;"></div>
<div class="a" style="left:792.2px;top:175.3px;width:7.8px;height:17px;background:#3a3f44;border-radius:1px"></div>
<svg class="a" style="left:793px;top:176.5px;" width="6" height="4" viewBox="0 0 6 4"><path d="M0.8 3L3 0.8L5.2 3Z" fill="#c8c8c8"/></svg>
<svg class="a" style="left:793px;top:187px;" width="6" height="4" viewBox="0 0 6 4"><path d="M0.8 1L3 3.2L5.2 1Z" fill="#c8c8c8"/></svg>
<div class="a" style="left:655px;top:193.4px;width:135px;height:11px;background:#232629;"></div>
<div class="t" style="left:666.30px;top:197.30px;font-size:6.800px;color:#dadada;font-weight:400;transform:scale(1.0086,1.000);transform-origin:0 2.50px;">Grey 65%</div>
<div class="a" style="left:790.2px;top:193.4px;width:9.8px;height:11.2px;background:#3a3f44;border-radius:1px"></div>
<svg class="a" style="left:793px;top:198.2px;" width="4" height="3" viewBox="0 0 4 3"><path d="M0 0H3.6L1.8 2Z" fill="#c8c8c8"/></svg>
<div class="t" style="left:670.60px;top:208.80px;font-size:6.800px;color:#dadada;font-weight:400;transform:scale(0.9560,1.000);transform-origin:0 2.50px;">Default</div>
<div class="a" style="left:750.5px;top:205.8px;width:11.2px;height:11px;background:#3a3f44;border:0.6px solid #42474c;border-radius:1.5px"></div>
<div class="a" style="left:763px;top:205.8px;width:11.2px;height:11px;background:#3a3f44;border:0.6px solid #42474c;border-radius:1.5px"></div>
<div class="a" style="left:775.5px;top:205.8px;width:11.2px;height:11px;background:#3a3f44;border:0.6px solid #42474c;border-radius:1.5px"></div>
<div class="a" style="left:788px;top:205.8px;width:11.2px;height:11px;background:#3a3f44;border:0.6px solid #42474c;border-radius:1.5px"></div>
<svg class="a" style="left:752.6px;top:207.9px;" width="7" height="7" viewBox="0 0 7 7"><path d="M3.5 0.5V6.5M0.5 3.5H6.5" stroke="#c8c8c8" stroke-width="0.8"/></svg>
<svg class="a" style="left:765px;top:207.9px;" width="7" height="7" viewBox="0 0 7 7"><path d="M1 6L5.5 1.5L6 2L1.5 6.5Z M1 6 L0.6 6.8" fill="none" stroke="#c8c8c8" stroke-width="0.8"/></svg>
<svg class="a" style="left:777.4px;top:207.5px;" width="8" height="8" viewBox="0 0 8 8"><rect x="0.8" y="2.5" width="6.4" height="5" fill="none" stroke="#c8c8c8" stroke-width="0.8"/><rect x="1.5" y="0.8" width="3" height="1.7" fill="#c8c8c8"/></svg>
<svg class="a" style="left:789.9px;top:207.9px;" width="7.5" height="7.5" viewBox="0 0 7.5 7.5"><circle cx="3.7" cy="3.7" r="3" fill="none" stroke="#e0403c" stroke-width="0.9"/><path d="M1.6 1.6L5.8 5.8" stroke="#e0403c" stroke-width="0.9"/></svg>
<div class="a" style="left:724px;top:219.6px;width:10px;height:0.8px;background:#5a5f64;"></div>
<div class="a" style="left:655px;top:222.3px;width:30.7px;height:12px;background:#31363b;border:0.7px solid #41464b;border-bottom:none;border-radius:1.5px 1.5px 0 0"></div>
<div class="t" style="left:661.70px;top:225.60px;font-size:6.800px;color:#dadada;font-weight:400;transform:scale(0.9064,1.000);transform-origin:0 2.50px;">Layers</div>
<div class="a" style="left:688px;top:223px;width:53.6px;height:11px;background:#2b2f33;border:0.7px solid #3a3f44;border-bottom:none;border-radius:1.5px 1.5px 0 0"></div>
<div class="t" style="left:692.00px;top:225.70px;font-size:6.800px;color:#dadada;font-weight:400;transform:scale(0.9208,1.000);transform-origin:0 2.50px;">Grid and Guides</div>
<div class="t" style="left:658.30px;top:236.80px;font-size:6.800px;color:#d8d8d8;font-weight:400;transform:scale(0.8966,1.000);transform-origin:0 2.50px;">Layers</div>
<svg class="a" style="left:786px;top:235.8px;" width="7" height="7" viewBox="0 0 7 7"><rect x="0.8" y="0.8" width="5.4" height="5.4" fill="none" stroke="#7a7f84" stroke-width="0.6" stroke-dasharray="1.2 0.6"/><rect x="2.2" y="2.2" width="2.6" height="2.6" fill="none" stroke="#7a7f84" stroke-width="0.5"/></svg>
<svg class="a" style="left:793.5px;top:235.8px;" width="7" height="7" viewBox="0 0 7 7"><path d="M0.8 0.8L6.2 6.2M6.2 0.8L0.8 6.2" stroke="#8a8f94" stroke-width="0.8"/><rect x="0.5" y="0.5" width="6" height="6" fill="none" stroke="#6a6f74" stroke-width="0.4"/></svg>
<div class="a" style="left:655px;top:244.8px;width:122px;height:10.3px;background:#3a3f44;border:0.6px solid #45494e;border-radius:1px"></div>
<div class="t" style="left:659.00px;top:247.50px;font-size:6.800px;color:#d8d8d8;font-weight:400;transform:scale(0.9352,1.000);transform-origin:0 2.50px;">Normal</div>
<svg class="a" style="left:770.4px;top:249px;" width="4" height="3" viewBox="0 0 4 3"><path d="M0 0H3.6L1.8 2Z" fill="#c8c8c8"/></svg>
<div class="a" style="left:779px;top:244.8px;width:21px;height:10.3px;background:#3a3f44;border:0.6px solid #42474c;border-radius:1.5px"></div>
<svg class="a" style="left:781.5px;top:246.3px;" width="8" height="8" viewBox="0 0 8 8"><path d="M0.5 0.8H7.5L4.8 4V7.5L3.2 6.6V4Z" fill="none" stroke="#c8c8c8" stroke-width="0.7"/></svg>
<svg class="a" style="left:792.6px;top:249px;" width="4" height="3" viewBox="0 0 4 3"><path d="M0 0H3.6L1.8 2Z" fill="#c8c8c8"/></svg>
<div class="a" style="left:655px;top:257.6px;width:122.7px;height:12px;background:#23597a;border:0.6px solid #2f6e92"></div>
<div class="t" style="left:694.05px;top:261.10px;font-size:6.800px;color:#d8d8d8;font-weight:400;transform:scale(0.9650,1.000);transform-origin:0 2.50px;">Opacity:  100%</div>
<svg class="a" style="left:779.6px;top:257.5px;" width="6" height="12.5" viewBox="0 0 6 12.5"><path d="M0.9 5.0L3 2.25L5.1 5.0Z" fill="#aaa"/><path d="M0.9 7.5L3 10.25L5.1 7.5Z" fill="#aaa"/></svg>
<div class="a" style="left:786px;top:257.3px;width:14px;height:12.6px;background:#3a3f44;border:0.6px solid #42474c;border-radius:1.5px"></div>
<svg class="a" style="left:788.3px;top:259.5px;" width="10" height="9" viewBox="0 0 10 9"><rect x="0.5" y="0.5" width="8" height="7" fill="none" stroke="#d8d8d8" stroke-width="0.8"/><path d="M0.5 2.3H8.5M2.5 3.6V7M4 3.6V7M5.5 3.6V7" stroke="#d8d8d8" stroke-width="0.6"/></svg>
<div class="a" style="left:655px;top:271px;width:145px;height:132.7px;background:#232629;"></div>
<div class="a" style="left:655px;top:272.2px;width:145px;height:12px;background:#2a2e32;"></div>
<div class="a" style="left:655px;top:285.2px;width:145px;height:12.9px;background:#26597a;"></div>
<div class="a" style="left:655px;top:298.4px;width:145px;height:13px;background:#26292d;"></div>
<div class="a" style="left:655px;top:311.4px;width:145px;height:13px;background:#232629;"></div>
<div class="a" style="left:669px;top:273px;width:10px;height:10.7px;background:#ffffff;"></div>
<div class="a" style="left:669.5px;top:273.6px;width:9.5px;height:9.5px;border-radius:50%;background:#e8700a"></div>
<svg class="a" style="left:680.7px;top:273.2px;" width="6" height="11" viewBox="0 0 6 11"><rect x="0.5" y="0.5" width="5" height="4" fill="none" stroke="#c8c8c8" stroke-width="0.7"/><path d="M0.5 1.8H5.5" stroke="#c8c8c8" stroke-width="0.6"/><path d="M1 6.8L3 8.8L5 6.8" fill="none" stroke="#c8c8c8" stroke-width="0.6"/></svg>
<div class="t" style="left:688.20px;top:275.80px;font-size:6.800px;color:#dadada;font-weight:400;transform:scale(0.9969,1.000);transform-origin:0 2.50px;">Group 3</div>
<svg class="a" style="left:673px;top:288px;" width="4" height="7" viewBox="0 0 4 7"><path d="M0.5 0V5.5H3.5" fill="none" stroke="#4a7b98" stroke-width="0.6"/></svg>
<div class="a" style="left:681.8px;top:286px;width:10.2px;height:11px;background:#ffffff;"></div>
<div class="a" style="left:682.3px;top:286.4px;width:9.6px;height:9.6px;border-radius:50%;background:#e8700a"></div>
<svg class="a" style="left:694px;top:286.5px;" width="6" height="6" viewBox="0 0 6 6"><path d="M0.8 3.5V0.8H5V3.8L3.5 5.2" fill="none" stroke="#c8c8c8" stroke-width="0.7"/><path d="M2.5 2.5 L4 4" stroke="#c8c8c8" stroke-width="0.5"/></svg>
<div class="t" style="left:702.00px;top:289.10px;font-size:6.800px;color:#ffffff;font-weight:700;transform:scale(1.0544,1.000);transform-origin:0 2.50px;">Vector Layer 2 ...</div>
<div class="a" style="left:759.8px;top:285.2px;width:0.6px;height:12.9px;background:#1c4a66;"></div>
<div class="t" style="left:760.60px;top:289.10px;font-size:6.800px;color:#e0e0e0;font-weight:400;transform:scale(1.1252,1.000);transform-origin:0 2.50px;">Fx</div>
<div class="a" style="left:669px;top:299.4px;width:10px;height:11px;background:#b89a68;border-radius:1px"></div>
<svg class="a" style="left:680.8px;top:299.2px;" width="6" height="6" viewBox="0 0 6 6"><path d="M0.8 3.5V0.8H5V3.8L3.5 5.2" fill="none" stroke="#6a6e72" stroke-width="0.7"/></svg>
<div class="t" style="left:688.50px;top:302.80px;font-size:6.800px;color:#7c8084;font-weight:400;transform:scale(0.9856,1.000);transform-origin:0 2.50px;">Paint Layer 1</div>
<div class="a" style="left:669px;top:313px;width:10px;height:11px;background:#ffffff;"></div>
<svg class="a" style="left:680.8px;top:312.4px;" width="6" height="6" viewBox="0 0 6 6"><path d="M0.8 3.5V0.8H5V3.8L3.5 5.2" fill="none" stroke="#c8c8c8" stroke-width="0.7"/></svg>
<div class="t" style="left:688.50px;top:316.00px;font-size:6.800px;color:#dadada;font-weight:400;transform:scale(1.0194,1.000);transform-origin:0 2.50px;">Background</div>
<svg class="a" style="left:772px;top:274.8px;" width="6" height="7" viewBox="0 0 6 7"><rect x="0.8" y="3" width="4.4" height="3.4" fill="#6a6e72"/><path d="M1.6 3V1.8A1.4 1.4 0 0 1 4.4 1.8" fill="none" stroke="#6a6e72" stroke-width="0.6"/></svg>
<svg class="a" style="left:780.8px;top:275.1px;" width="9" height="7" viewBox="0 0 9 7"><path d="M7.6 0.6 Q6.4 5.8 3.4 5.8 Q0.9 5.8 1.2 3.4 Q1.6 0.8 3.8 0.8 Q6 0.8 7.4 6.2" fill="none" stroke="#74787c" stroke-width="0.9"/></svg>
<svg class="a" style="left:790.5px;top:275.8px;" width="9" height="5" viewBox="0 0 9 5"><rect x="0.5" y="0.5" width="3.5" height="3.5" fill="none" stroke="#6a6e72" stroke-width="0.6"/><rect x="4.8" y="0.5" width="3.5" height="3.5" fill="none" stroke="#6a6e72" stroke-width="0.6"/></svg>
<svg class="a" style="left:772px;top:288.1px;" width="6" height="7" viewBox="0 0 6 7"><rect x="0.8" y="3" width="4.4" height="3.4" fill="#6a6e72"/><path d="M1.6 3V1.8A1.4 1.4 0 0 1 4.4 1.8" fill="none" stroke="#6a6e72" stroke-width="0.6"/></svg>
<svg class="a" style="left:780.8px;top:288.40000000000003px;" width="9" height="7" viewBox="0 0 9 7"><path d="M7.6 0.6 Q6.4 5.8 3.4 5.8 Q0.9 5.8 1.2 3.4 Q1.6 0.8 3.8 0.8 Q6 0.8 7.4 6.2" fill="none" stroke="#74787c" stroke-width="0.9"/></svg>
<div class="a" style="left:791px;top:287.6px;width:8px;height:8px;background:conic-gradient(#7a7e82 25%,#50545a 0 50%,#7a7e82 0 75%,#50545a 0);background-size:2.7px 2.7px"></div>
<svg class="a" style="left:772px;top:301.8px;" width="6" height="7" viewBox="0 0 6 7"><rect x="0.8" y="3" width="4.4" height="3.4" fill="#6a6e72"/><path d="M1.6 3V1.8A1.4 1.4 0 0 1 4.4 1.8" fill="none" stroke="#6a6e72" stroke-width="0.6"/></svg>
<svg class="a" style="left:780.8px;top:302.1px;" width="9" height="7" viewBox="0 0 9 7"><path d="M7.6 0.6 Q6.4 5.8 3.4 5.8 Q0.9 5.8 1.2 3.4 Q1.6 0.8 3.8 0.8 Q6 0.8 7.4 6.2" fill="none" stroke="#74787c" stroke-width="0.9"/></svg>
<div class="a" style="left:791px;top:301.3px;width:8px;height:8px;background:conic-gradient(#7a7e82 25%,#50545a 0 50%,#7a7e82 0 75%,#50545a 0);background-size:2.7px 2.7px"></div>
<svg class="a" style="left:772px;top:315.0px;" width="6" height="7" viewBox="0 0 6 7"><rect x="0.8" y="3" width="4.4" height="3.4" fill="#6a6e72"/><path d="M1.6 3V1.8A1.4 1.4 0 0 1 4.4 1.8" fill="none" stroke="#6a6e72" stroke-width="0.6"/></svg>
<svg class="a" style="left:780.8px;top:315.3px;" width="9" height="7" viewBox="0 0 9 7"><path d="M7.6 0.6 Q6.4 5.8 3.4 5.8 Q0.9 5.8 1.2 3.4 Q1.6 0.8 3.8 0.8 Q6 0.8 7.4 6.2" fill="none" stroke="#74787c" stroke-width="0.9"/></svg>
<div class="a" style="left:791px;top:314.5px;width:8px;height:8px;background:conic-gradient(#7a7e82 25%,#50545a 0 50%,#7a7e82 0 75%,#50545a 0);background-size:2.7px 2.7px"></div>
<div class="a" style="left:779.9px;top:285.2px;width:0.6px;height:12.9px;background:#1c4a66;"></div>
<div class="a" style="left:770.6px;top:285.2px;width:0.6px;height:12.9px;background:#1c4a66;"></div>
<div class="a" style="left:790.3px;top:285.2px;width:0.6px;height:12.9px;background:#1c4a66;"></div>
<div class="a" style="left:655px;top:403.7px;width:145px;height:15.8px;background:#31363b;"></div>
<svg class="a" style="left:657px;top:406.5px;" width="9" height="9" viewBox="0 0 9 9"><rect x="0.6" y="0.6" width="7.8" height="7.8" fill="none" stroke="#d8d8d8" stroke-width="0.9"/><path d="M4.5 2.5V6.5M2.5 4.5H6.5" stroke="#d8d8d8" stroke-width="0.9"/></svg>
<svg class="a" style="left:668px;top:410px;" width="4" height="3" viewBox="0 0 4 3"><path d="M0 0H3.6L1.8 2Z" fill="#c8c8c8"/></svg>
<svg class="a" style="left:677px;top:406.5px;" width="9" height="9" viewBox="0 0 9 9"><rect x="0.6" y="2.6" width="5.6" height="5.6" fill="none" stroke="#d8d8d8" stroke-width="0.8"/><rect x="2.6" y="0.6" width="5.6" height="5.6" fill="#31363b" stroke="#d8d8d8" stroke-width="0.8"/></svg>
<svg class="a" style="left:693px;top:408.5px;" width="9" height="6" viewBox="0 0 9 6"><path d="M0.8 1L4.5 4.6L8.2 1" fill="none" stroke="#d8d8d8" stroke-width="0.9"/></svg>
<svg class="a" style="left:709px;top:408.5px;" width="9" height="6" viewBox="0 0 9 6"><path d="M0.8 4.8L4.5 1.2L8.2 4.8" fill="none" stroke="#d8d8d8" stroke-width="0.9"/></svg>
<svg class="a" style="left:725px;top:406.8px;" width="9" height="9" viewBox="0 0 9 9"><path d="M0.5 1.6H8.5M0.5 4.5H8.5M0.5 7.4H8.5" stroke="#d8d8d8" stroke-width="0.8"/><rect x="5" y="0.8" width="1.4" height="1.6" fill="#d8d8d8"/><rect x="2" y="3.7" width="1.4" height="1.6" fill="#d8d8d8"/><rect x="5" y="6.6" width="1.4" height="1.6" fill="#d8d8d8"/></svg>
<svg class="a" style="left:788px;top:406.5px;" width="8" height="10" viewBox="0 0 8 10"><rect x="0.5" y="1" width="7" height="1.4" rx="0.7" fill="#d8d8d8"/><path d="M1.2 3.3H6.8L6.3 9.3H1.7Z" fill="#d8d8d8"/></svg>
<svg class="a" style="left:0;top:0" width="14" height="434"><path d="M4.2 50.8 L4.2 57.6 L5.8 56 L7.2 58.2 L8.3 57.6 L7 55.4 L9.2 55.2Z" fill="#cdd0d2"/><path d="M3.2 63.8H9.8M6.5 63.8V71.2M5 71.2H8" stroke="#cdd0d2" stroke-width="1.1" fill="none"/><path d="M3.2 63.3V65.2M9.8 63.3V65.2" stroke="#cdd0d2" stroke-width="0.8"/><path d="M3 83.5 Q3.2 77 9.2 76.2" stroke="#cdd0d2" stroke-width="1.2" fill="none"/><path d="M6 79.5 L10 80.5 L7.6 83.5Z" fill="#cdd0d2"/><path d="M3 97.2 L4.2 92.5 L8.6 89 L10.8 91.3 L7.4 95.8Z" fill="#cdd0d2"/><circle cx="6" cy="93.8" r="0.9" fill="#31363b"/><path d="M3 97.2L5.6 94.6" stroke="#31363b" stroke-width="0.5"/><rect x="0.9" y="103" width="12.3" height="13" fill="#5fbdee"/><path d="M4 113.5 L10 105.5" stroke="#f0c8a0" stroke-width="1.3" stroke-linecap="round"/><ellipse cx="4.8" cy="112" rx="1.6" ry="1.4" fill="#f0c8a0"/><ellipse cx="9.2" cy="106.5" rx="1" ry="1.2" fill="#f0c8a0"/><path d="M3 125.6 L10.3 118.2" stroke="#cdd0d2" stroke-width="1.1"/><rect x="2.8" y="131.6" width="7.6" height="7.6" fill="none" stroke="#cdd0d2" stroke-width="1.1" rx="0.5"/><circle cx="6.6" cy="148.8" r="3.8" fill="none" stroke="#cdd0d2" stroke-width="1.1"/><path d="M5 157.6 L9.6 157.8 L10.4 161 L7.6 165.2 L3 165.2 L2.6 161.6Z" fill="none" stroke="#cdd0d2" stroke-width="1" stroke-linejoin="round"/><path d="M3.6 170 L9.8 175.4 L3 177.8 L5.6 173.2" fill="none" stroke="#cdd0d2" stroke-width="1" stroke-linejoin="round"/><path d="M3 191 Q3 184.6 6.6 184.6 Q10.2 184.6 10.2 191" fill="none" stroke="#cdd0d2" stroke-width="1.1"/><path d="M2.6 183.6H10.6" stroke="#cdd0d2" stroke-width="0.7"/><circle cx="6.6" cy="183.8" r="1" fill="#cdd0d2"/><path d="M3 198.5 Q6 196 9.4 197.2" stroke="#cdd0d2" stroke-width="1.1" fill="none"/><path d="M7.4 197.5 Q6.4 200 6.8 203.8" stroke="#cdd0d2" stroke-width="1.3" fill="none"/><path d="M6 210.2 Q10.5 209.8 9.4 212.4 Q8 215.2 3 217" stroke="#cdd0d2" stroke-width="1.1" fill="none"/><circle cx="6.2" cy="212.6" r="0.8" fill="#cdd0d2"/><path d="M10 222.6 L6 223.6 L8.8 226.4Z" fill="#cdd0d2"/><path d="M8 224.6 L3.2 226.6M8.4 225.6 L4.6 229.4M7 224.2 L4.2 224.8" stroke="#cdd0d2" stroke-width="1.1"/><rect x="3.4" y="239" width="6.4" height="6" fill="none" stroke="#cdd0d2" stroke-width="1"/><rect x="2.4" y="238.2" width="1.8" height="1.8" fill="#cdd0d2"/><rect x="9" y="238.2" width="1.8" height="1.8" fill="#cdd0d2"/><rect x="2.4" y="244.2" width="1.8" height="1.8" fill="#cdd0d2"/><rect x="9" y="244.2" width="1.8" height="1.8" fill="#cdd0d2"/><circle cx="6.6" cy="242" r="0.6" fill="#cdd0d2"/><path d="M6.6 251V258.6M2.7 254.8H10.5" stroke="#cdd0d2" stroke-width="1.1"/><path d="M4.2 264.6V269.8H10.2M2.6 266.4H8.6V271.6" fill="none" stroke="#cdd0d2" stroke-width="1.1"/><defs><linearGradient id="gg" x1="0" x2="1"><stop offset="0" stop-color="#555a5e"/><stop offset="1" stop-color="#d8d8d8"/></linearGradient></defs><rect x="2.8" y="280.2" width="8" height="8" fill="url(#gg)" stroke="#cdd0d2" stroke-width="0.8"/><path d="M3 300.5 L7.6 295.6" stroke="#cdd0d2" stroke-width="1.3"/><path d="M7 294.2 L9.6 293 L10.8 294.2 L9.6 296.8 Z" fill="#cdd0d2"/><path d="M6.4 294.4L9.4 297.4" stroke="#cdd0d2" stroke-width="0.9"/><path d="M4.6 311 L9.6 306.4" stroke="#cdd0d2" stroke-width="1.4" stroke-linecap="round"/><path d="M2.6 310.4 A2.6 2.6 0 0 0 6.6 312.8" fill="none" stroke="#8a8e92" stroke-width="0.6"/><path d="M3.2 326.2 L10 319.8" stroke="#cdd0d2" stroke-width="1.2"/><circle cx="4.2" cy="320.6" r="1.2" fill="#cdd0d2"/><circle cx="9" cy="325.4" r="1.2" fill="#cdd0d2"/><path d="M3 336 L6.6 332.6 L10 336 L6.6 339.6Z" fill="#cdd0d2"/><path d="M3.6 335.6H9.2" stroke="#31363b" stroke-width="0.6"/><path d="M10.2 337 Q11 339 10.2 339.8" stroke="#cdd0d2" stroke-width="0.8" fill="none"/><path d="M3.2 348.6 V355.6 H10.2Z" fill="none" stroke="#cdd0d2" stroke-width="1.1" stroke-linejoin="round"/><path d="M2.8 361 L10 361 L9.6 368.6Z" fill="none" stroke="#cdd0d2" stroke-width="1.1" stroke-linejoin="round"/><path d="M6.8 364 V366.5" stroke="#cdd0d2" stroke-width="0.6"/><path d="M7 374 L10.4 377.4 L8 378.4 L5.6 376 Z" fill="#cdd0d2"/><path d="M6 376.2 L7.8 378 M6.4 377.4 L3 381.2" stroke="#cdd0d2" stroke-width="1"/><rect x="2.8" y="390.2" width="7.6" height="7.4" fill="none" stroke="#cdd0d2" stroke-width="1" stroke-dasharray="1.4 1"/><circle cx="6.6" cy="407" r="3.7" fill="none" stroke="#cdd0d2" stroke-width="1" stroke-dasharray="1.3 1"/><rect x="1" y="411.8" width="11.5" height="6.9" fill="#3a3f44" stroke="#454a4f" stroke-width="0.5" rx="1"/><path d="M5 414.3 H8.4 L6.7 416.2Z" fill="#d0d0d0"/></svg>
<div class="a" style="left:14.2px;top:226px;width:1.2px;height:9.5px;background:#5a5f64;"></div>
<div class="a" style="left:408.7px;top:185.6px;width:262.3px;height:199.4px;background:#31363b;border:0.8px solid #2872a8;border-top:none"></div>
<div class="a" style="left:408.7px;top:185.6px;width:262.3px;height:15.7px;background:#0078d7;"></div>
<div class="a" style="left:414.844px;top:190.34400000000002px;width:6.256px;height:6.256px;border-radius:50%;background:conic-gradient(from 0deg,#ff50f0 0deg,#ff70d0 60deg,#ffe070 115deg,#b0ff90 165deg,#40e8ff 215deg,#50b0ff 260deg,#c070ff 310deg,#ff50f0 360deg)"></div>
<svg class="a" style="left:414.3px;top:189.8px;" width="6.8" height="6.8" viewBox="0 0 6.8 6.8"><path d="M0.34 0.34 L4.6240000000000006 4.6240000000000006" stroke="#1a1a1a" stroke-width="1.36" stroke-linecap="round"/></svg>
<div class="t" style="left:423.80px;top:190.30px;font-size:6.800px;color:#f4f8fc;font-weight:400;transform:scale(0.9150,1.000);transform-origin:0 2.50px;-webkit-text-stroke:0">Custom Segmented Gradient – Krita</div>
<svg class="a" style="left:660.3px;top:190.8px;" width="5" height="5" viewBox="0 0 5 5"><path d="M0 0L5 5M5 0L0 5" stroke="#fff" stroke-width="0.9"/></svg>
<div class="t" style="left:415.00px;top:210.10px;font-size:6.800px;color:#d0d0d0;font-weight:400;transform:scale(0.8738,1.200);transform-origin:0 2.50px;">Name:</div>
<div class="a" style="left:437.8px;top:207px;width:226.8px;height:10.6px;background:#25292c;border-radius:1px"></div>
<div class="t" style="left:439.30px;top:210.10px;font-size:6.800px;color:#d8d8d8;font-weight:400;transform:scale(1.0402,1.200);transform-origin:0 2.50px;">BG-Krita2. Gradient background for brush preset icons.</div>
<div class="a" style="left:417.5px;top:223.6px;width:245px;height:19.8px;background:#2a2e32;"></div>
<div class="a" style="left:418px;top:224px;width:43.6px;height:19px;background:linear-gradient(90deg,#ffffff,#dcdbe0);"></div>
<div class="a" style="left:461.6px;top:224px;width:200.6px;height:19px;background:linear-gradient(90deg,#b5b4bc,#6f6d7d);"></div>
<div class="a" style="left:417.5px;top:243px;width:245px;height:0.7px;background:#6a6d70;"></div>
<div class="a" style="left:417.8px;top:243.6px;width:43.8px;height:5.6px;background:#ffffff;"></div>
<div class="a" style="left:461.6px;top:243.6px;width:200.6px;height:5.6px;background:#3daee9;"></div>
<svg class="a" style="left:415.2px;top:243.6px;" width="6" height="6" viewBox="0 0 6 6"><path d="M3 0.6L5.4 5.4H0.6Z" fill="#ffffff" stroke="#222" stroke-width="0.6"/></svg>
<svg class="a" style="left:458.6px;top:243.6px;" width="6" height="6" viewBox="0 0 6 6"><path d="M3 0.6L5.4 5.4H0.6Z" fill="#ffffff" stroke="#222" stroke-width="0.6"/></svg>
<svg class="a" style="left:572.5px;top:243.6px;" width="6" height="6" viewBox="0 0 6 6"><path d="M3 0.6L5.4 5.4H0.6Z" fill="#ffffff" stroke="#222" stroke-width="0.6"/></svg>
<svg class="a" style="left:659.0px;top:243.6px;" width="6" height="6" viewBox="0 0 6 6"><path d="M3 0.6L5.4 5.4H0.6Z" fill="#ffffff" stroke="#222" stroke-width="0.6"/></svg>
<div class="t" style="left:415.00px;top:255.30px;font-size:6.800px;color:#d0d0d0;font-weight:400;transform:scale(0.9480,1.200);transform-origin:0 2.50px;">Segment Color</div>
<div class="t" style="left:632.50px;top:255.30px;font-size:6.800px;color:#d0d0d0;font-weight:400;transform:scale(0.9420,1.200);transform-origin:0 2.50px;">Opacity:</div>
<svg class="a" style="left:433.9px;top:267.4px;" width="8" height="8" viewBox="0 0 8 8"><circle cx="4" cy="4" r="3.3" fill="#202326" stroke="#2c3034" stroke-width="0.5"/><circle cx="4" cy="4" r="1.25" fill="#e8e8e8"/></svg>
<div class="t" style="left:444.70px;top:268.90px;font-size:6.800px;color:#dadada;font-weight:400;transform:scale(0.9473,1.200);transform-origin:0 2.50px;">Color</div>
<div class="t" style="left:419.90px;top:268.90px;font-size:6.800px;color:#d0d0d0;font-weight:400;transform:scale(0.9518,1.200);transform-origin:0 2.50px;">Left:</div>
<svg class="a" style="left:433.9px;top:283px;" width="8" height="8" viewBox="0 0 8 8"><circle cx="4" cy="4" r="3.3" fill="#202326" stroke="#2c3034" stroke-width="0.5"/></svg>
<div class="t" style="left:444.70px;top:284.50px;font-size:6.800px;color:#dadada;font-weight:400;transform:scale(1.0467,1.200);transform-origin:0 2.50px;">Foreground</div>
<div class="a" style="left:488px;top:283.8px;width:6.3px;height:6.3px;background:#25292c;border-radius:0.6px"></div>
<div class="t" style="left:497.20px;top:284.50px;font-size:6.800px;color:#6e7276;font-weight:400;transform:scale(1.0024,1.200);transform-origin:0 2.50px;">Transparent</div>
<svg class="a" style="left:433.9px;top:296.3px;" width="8" height="8" viewBox="0 0 8 8"><circle cx="4" cy="4" r="3.3" fill="#202326" stroke="#2c3034" stroke-width="0.5"/></svg>
<div class="t" style="left:444.70px;top:297.80px;font-size:6.800px;color:#dadada;font-weight:400;transform:scale(1.0139,1.200);transform-origin:0 2.50px;">Background</div>
<div class="a" style="left:488px;top:297.1px;width:6.3px;height:6.3px;background:#25292c;border-radius:0.6px"></div>
<div class="t" style="left:497.20px;top:297.80px;font-size:6.800px;color:#6e7276;font-weight:400;transform:scale(1.0024,1.200);transform-origin:0 2.50px;">Transparent</div>
<svg class="a" style="left:433.9px;top:311.6px;" width="8" height="8" viewBox="0 0 8 8"><circle cx="4" cy="4" r="3.3" fill="#202326" stroke="#2c3034" stroke-width="0.5"/><circle cx="4" cy="4" r="1.25" fill="#e8e8e8"/></svg>
<div class="t" style="left:444.70px;top:313.10px;font-size:6.800px;color:#dadada;font-weight:400;transform:scale(0.9473,1.200);transform-origin:0 2.50px;">Color</div>
<div class="t" style="left:415.60px;top:313.10px;font-size:6.800px;color:#d0d0d0;font-weight:400;transform:scale(0.9513,1.200);transform-origin:0 2.50px;">Right:</div>
<svg class="a" style="left:433.9px;top:327.8px;" width="8" height="8" viewBox="0 0 8 8"><circle cx="4" cy="4" r="3.3" fill="#202326" stroke="#2c3034" stroke-width="0.5"/></svg>
<div class="t" style="left:444.70px;top:329.30px;font-size:6.800px;color:#dadada;font-weight:400;transform:scale(1.0467,1.200);transform-origin:0 2.50px;">Foreground</div>
<div class="a" style="left:488px;top:328.6px;width:6.3px;height:6.3px;background:#25292c;border-radius:0.6px"></div>
<div class="t" style="left:497.20px;top:329.30px;font-size:6.800px;color:#6e7276;font-weight:400;transform:scale(1.0024,1.200);transform-origin:0 2.50px;">Transparent</div>
<svg class="a" style="left:433.9px;top:341.1px;" width="8" height="8" viewBox="0 0 8 8"><circle cx="4" cy="4" r="3.3" fill="#202326" stroke="#2c3034" stroke-width="0.5"/></svg>
<div class="t" style="left:444.70px;top:342.60px;font-size:6.800px;color:#dadada;font-weight:400;transform:scale(1.0139,1.200);transform-origin:0 2.50px;">Background</div>
<div class="a" style="left:488px;top:341.90000000000003px;width:6.3px;height:6.3px;background:#25292c;border-radius:0.6px"></div>
<div class="t" style="left:497.20px;top:342.60px;font-size:6.800px;color:#6e7276;font-weight:400;transform:scale(1.0024,1.200);transform-origin:0 2.50px;">Transparent</div>
<div class="a" style="left:488px;top:265.0px;width:141.2px;height:13.8px;background:#3a3f44;border:0.6px solid #4a4f54;border-radius:1px"></div>
<div class="a" style="left:490.2px;top:266.9px;width:136.8px;height:10px;background:#b8b6bf;"></div>
<div class="a" style="left:632.5px;top:265.0px;width:32.5px;height:13.8px;background:#25292c;border-radius:1px"></div>
<div class="t" style="left:637.90px;top:269.40px;font-size:6.800px;color:#d8d8d8;font-weight:400;transform:scale(0.9127,1.200);transform-origin:0 2.50px;">100 %</div>
<div class="a" style="left:658px;top:265.59999999999997px;width:6.4px;height:12.6px;background:#3a3f44;border-radius:1px"></div>
<svg class="a" style="left:658.3px;top:265.4px;" width="6" height="13" viewBox="0 0 6 13"><path d="M0.9 5.2L3 2.34L5.1 5.2Z" fill="#aaa"/><path d="M0.9 7.8L3 10.66L5.1 7.8Z" fill="#aaa"/></svg>
<div class="a" style="left:488px;top:309.0px;width:141.2px;height:13.8px;background:#3a3f44;border:0.6px solid #4a4f54;border-radius:1px"></div>
<div class="a" style="left:490.2px;top:310.9px;width:136.8px;height:10px;background:#6e6b7c;"></div>
<div class="a" style="left:632.5px;top:309.0px;width:32.5px;height:13.8px;background:#25292c;border-radius:1px"></div>
<div class="t" style="left:637.90px;top:313.40px;font-size:6.800px;color:#d8d8d8;font-weight:400;transform:scale(0.9127,1.200);transform-origin:0 2.50px;">100 %</div>
<div class="a" style="left:658px;top:309.59999999999997px;width:6.4px;height:12.6px;background:#3a3f44;border-radius:1px"></div>
<svg class="a" style="left:658.3px;top:309.4px;" width="6" height="13" viewBox="0 0 6 13"><path d="M0.9 5.2L3 2.34L5.1 5.2Z" fill="#aaa"/><path d="M0.9 7.8L3 10.66L5.1 7.8Z" fill="#aaa"/></svg>
<div class="a" style="left:569px;top:354px;width:49px;height:10.4px;background:#3a3f44;border:0.6px solid #44494e;border-radius:1.5px"></div>
<div class="t" style="left:570.80px;top:356.70px;font-size:6.800px;color:#d8d8d8;font-weight:400;transform:scale(0.9623,1.200);transform-origin:0 2.50px;">Linear</div>
<svg class="a" style="left:611px;top:358.2px;" width="4" height="3" viewBox="0 0 4 3"><path d="M0 0H3.6L1.8 2Z" fill="#c8c8c8"/></svg>
<div class="a" style="left:622px;top:354px;width:42.5px;height:10.4px;background:#3a3f44;border:0.6px solid #44494e;border-radius:1.5px"></div>
<div class="t" style="left:623.50px;top:356.70px;font-size:6.800px;color:#d8d8d8;font-weight:400;transform:scale(0.8957,1.200);transform-origin:0 2.50px;">RGB</div>
<svg class="a" style="left:657.4px;top:358.2px;" width="4" height="3" viewBox="0 0 4 3"><path d="M0 0H3.6L1.8 2Z" fill="#c8c8c8"/></svg>
<div class="a" style="left:625px;top:367.4px;width:40px;height:11.8px;background:#3b4146;border:0.9px solid #3d8fc0;border-radius:1.5px"></div>
<div class="t" style="left:637.00px;top:370.90px;font-size:6.800px;color:#e0e0e0;font-weight:400;transform:scale(0.9659,1.200);transform-origin:0 2.50px;">Close</div>
</body></html>
